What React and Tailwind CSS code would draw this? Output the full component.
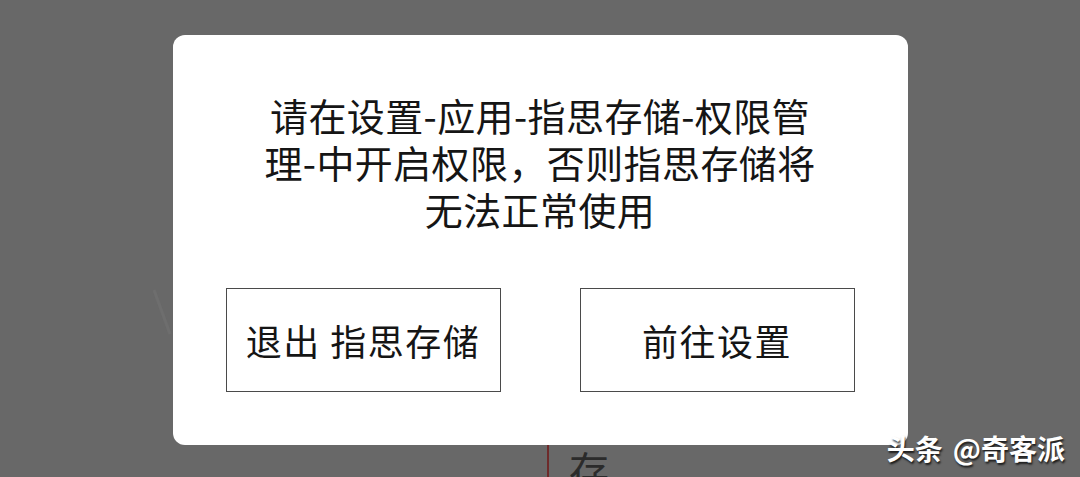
import React from 'react';

const cjk = { fontFamily: '"Noto Sans CJK SC", "Noto Sans", sans-serif' };

export default function App() {
  return (
    <div className="relative h-[477px] w-[1080px] overflow-hidden bg-[#686868]" style={cjk}>
      {/* dimmed page behind the dialog */}
      <div className="flex h-full">
        <div className="w-[547px] shrink-0" />
        <div className="mt-[420px] h-[80px] w-[2px] bg-[#6e2a2a]" />
        <div className="ml-[20px] mt-[397px] flex flex-col text-[40px] leading-[48px] text-[#2b2b2b]">
          <span>能</span>
          <span>存</span>
        </div>
      </div>
      <svg className="absolute left-[150px] top-[288px]" width="24" height="50" viewBox="0 0 24 50">
        <path d="M4 2 L20 46" stroke="#6e6e6e" strokeWidth="3" fill="none" />
      </svg>

      {/* dialog */}
      <div className="absolute inset-0 flex justify-center pt-[35px]">
        <div className="flex h-[410px] w-[735px] flex-col rounded-[12px] bg-white">
          <p className="mt-[56px] text-center text-[38px] leading-[47px] tracking-[0.4px] text-[#151515]">
            请在设置-应用-指思存储-权限管
            <br />
            理-中开启权限，否则指思存储将
            <br />
            无法正常使用
          </p>
          <div className="mt-[56px] flex gap-[79px] px-[53px]">
            <button className="flex h-[104px] flex-1 items-center justify-center border border-[#4a4a4a] text-[36px] tracking-[1.5px] text-[#151515]">
              退出 指思存储
            </button>
            <button className="flex h-[104px] flex-1 items-center justify-center border border-[#4a4a4a] text-[36px] tracking-[1.5px] text-[#151515]">
              前往设置
            </button>
          </div>
        </div>
      </div>

      {/* watermark */}
      <div className="absolute bottom-[15px] right-[15px] flex items-center gap-[10px] text-[28px] font-semibold leading-none text-white [text-shadow:1px_2px_2px_rgba(0,0,0,0.75)]">
        <span className="font-bold">头条</span>
        <span>@奇客派</span>
      </div>
    </div>
  );
}
